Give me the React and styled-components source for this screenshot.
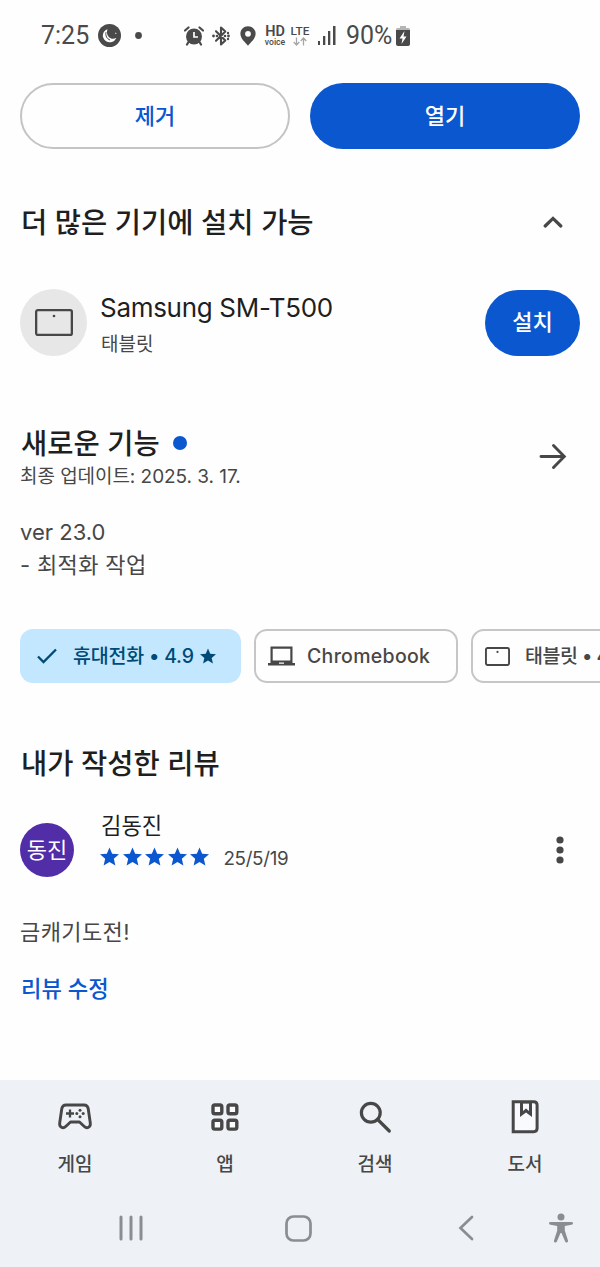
import React from "react";
import styled, { createGlobalStyle } from "styled-components";

const BLUE = "#0b57cf";
const INK = "#1f1f1f";
const MUTED = "#474747";

const Global = createGlobalStyle`
  * { box-sizing: border-box; }
  html, body { margin: 0; padding: 0; background: #fefefe; }
  body {
    font-family: Inter, "Noto Sans CJK KR", sans-serif;
    color: ${INK};
    overflow: hidden;
  }
  button { font-family: inherit; padding: 0; border: 0; background: none; }
  svg { display: block; flex: none; }
`;

const Screen = styled.div`
  width: 600px;
  height: 1267px;
  display: flex;
  flex-direction: column;
  background: #fefefe;
  overflow: hidden;
  white-space: nowrap;
`;

const StatusBar = styled.header`
  height: 83px;
  padding: 0 0 12px 41px;
  display: flex;
  align-items: center;
  font-family: Roboto, sans-serif;
  color: #4a4a4a;
`;

const StatusText = styled.span`
  display: block;
  width: ${(p) => p.$w}px;
  font-size: 25px;
  font-weight: 370;
  line-height: 30px;
`;

const StatusGlyph = styled.span`
  margin-left: ${(p) => p.$gap}px;
`;

const NetworkLabel = styled.span`
  width: ${(p) => p.$w}px;
  margin-left: ${(p) => p.$gap}px;
  display: flex;
  flex-direction: column;
  align-items: center;
  font-weight: ${(p) => p.$weight};
  font-size: ${(p) => p.$size}px;
  line-height: 12px;
`;

const VoiceLabel = styled.span`
  font-size: 8.6px;
  font-weight: 500;
  line-height: 8px;
`;

const Actions = styled.div`
  display: grid;
  grid-template-columns: 1fr 1fr;
  gap: 20px;
  padding: 0 20px;
`;

const PillButton = styled.button`
  height: 66px;
  width: ${(p) => p.$w || "auto"};
  padding-bottom: 1px;
  border-radius: 33px;
  border: ${(p) => (p.$outlined ? "2px solid #c4c4c4" : "0")};
  background: ${(p) => (p.$outlined ? "transparent" : BLUE)};
  color: ${(p) => (p.$outlined ? BLUE : "#fff")};
  font-size: 22px;
  font-weight: 500;
  line-height: 30px;
`;

const Section = styled.section`
  padding: 0 20px;
  margin-top: ${(p) => p.$top}px;
`;

const Row = styled.div`
  display: flex;
  align-items: center;
  justify-content: space-between;
`;

const Heading = styled.h2`
  margin: 0;
  padding: 1px 0 0 ${(p) => p.$inset || 0}px;
  font-size: 28.5px;
  font-weight: 500;
  line-height: 39px;
`;

const IconSlot = styled.span`
  width: 54px;
  display: flex;
  justify-content: center;
`;

const DeviceRow = styled.div`
  margin-top: 47px;
  height: 67px;
  display: flex;
  align-items: center;
`;

const DeviceBadge = styled.div`
  width: 67px;
  height: 67px;
  border-radius: 50%;
  background: #e7e7e7;
  display: flex;
  align-items: center;
  justify-content: center;
`;

const DeviceInfo = styled.div`
  flex: 1;
  padding-top: 6px;
  margin-left: 13px;
`;

const DeviceName = styled.div`
  font-size: 26px;
  line-height: 38px;
  letter-spacing: -0.3px;
`;

const DeviceKind = styled.div`
  padding-left: 1px;
  font-size: 19px;
  line-height: 35px;
  color: ${MUTED};
`;

const NewDot = styled.i`
  display: inline-block;
  width: 14px;
  height: 14px;
  margin-left: 13px;
  border-radius: 50%;
  background: ${BLUE};
`;

const HeadingLine = styled.div`
  display: flex;
  align-items: center;
`;

const UpdateDate = styled.div`
  padding-top: 1px;
  font-size: 19px;
  line-height: 26px;
  letter-spacing: -0.05px;
  color: ${MUTED};
`;

const Notes = styled.p`
  margin: 26px 0 0;
  font-size: 22px;
  line-height: 33px;
  color: ${MUTED};
`;

const NoteLine = styled.span`
  display: block;
  letter-spacing: ${(p) => p.$track || 0}px;
`;

const ChipStrip = styled.div`
  margin-top: 47px;
  padding-left: 20px;
  display: flex;
  gap: 13px;
`;

const Chip = styled.button`
  flex: none;
  width: ${(p) => p.$w}px;
  height: 54px;
  padding-left: ${(p) => p.$pad}px;
  border-radius: 13px;
  border: ${(p) => (p.$selected ? "0" : "2px solid #c6c6c6")};
  background: ${(p) => (p.$selected ? "#c2e7ff" : "transparent")};
  color: ${(p) => (p.$selected ? "#004a77" : MUTED)};
  display: flex;
  align-items: center;
  font-size: 19.5px;
  font-weight: 500;
  line-height: 28px;
`;

const ChipLabel = styled.span`
  margin: 0 ${(p) => p.$right || 0}px 0 ${(p) => p.$left}px;
  letter-spacing: ${(p) => p.$track || 0}px;
`;

const ReviewRow = styled.div`
  margin-top: 29px;
  display: flex;
`;

const Avatar = styled.div`
  width: 54px;
  height: 54px;
  margin-top: 11px;
  border-radius: 50%;
  background: #512da8;
  color: #fff;
  font-size: 22px;
  line-height: 54px;
  text-align: center;
`;

const Reviewer = styled.div`
  flex: 1;
  margin-left: 26px;
`;

const ReviewerName = styled.div`
  padding-left: 1px;
  font-size: 22.2px;
  line-height: 28px;
`;

const Rating = styled.div`
  display: flex;
  align-items: center;
  height: 32px;
  color: ${BLUE};
`;

const Stars = styled.span`
  display: flex;
  gap: 3.6px;
`;

const ReviewDate = styled.span`
  margin: 6px 0 0 14px;
  font-size: 18.8px;
  line-height: 26px;
  letter-spacing: -0.3px;
  color: ${MUTED};
`;

const MenuSlot = styled.span`
  width: 40px;
  padding-top: 24px;
  display: flex;
  justify-content: center;
`;

const ReviewText = styled.p`
  margin: 40px 0 0;
  font-size: 22px;
  line-height: 30px;
  letter-spacing: 0.4px;
  color: ${MUTED};
`;

const EditLink = styled.a`
  display: block;
  margin-top: 27px;
  padding-left: 1px;
  font-size: 22.2px;
  font-weight: 500;
  line-height: 30px;
  color: ${BLUE};
`;

const BottomArea = styled.footer`
  height: 187px;
  margin-top: auto;
  background: #eef2f7;
`;

const Tabs = styled.nav`
  display: grid;
  grid-template-columns: repeat(4, 1fr);
`;

const Tab = styled.button`
  padding-top: 17px;
  display: flex;
  flex-direction: column;
  align-items: center;
  color: ${MUTED};
`;

const TabLabel = styled.span`
  margin-top: 15px;
  font-size: 19px;
  font-weight: 500;
  line-height: 26px;
`;

const SystemNav = styled.div`
  margin-top: 30px;
  height: 40px;
  padding-left: 116px;
  display: flex;
  align-items: center;
`;

const SystemKey = styled.span`
  width: 30px;
  margin-right: ${(p) => p.$after || 0}px;
  display: flex;
  justify-content: center;
`;

const Star = ({ size }) => (
  <svg width={size} height={size} viewBox="2 1.500 20 20" fill="currentColor">
    <path d="M12 17.270L18.180 21l-1.640-7.030L22 9.240l-7.190-.61L12 2 9.190 8.630 2 9.240l5.460 4.730L5.820 21z" />
  </svg>
);

const MoonIcon = () => (
  <svg width="23" height="23" viewBox="0 0 23 23">
    <circle cx="11.500" cy="11.500" r="11.500" fill="#4a4a4a" />
    <path d="M9.500 5.200C5.600 6.500 4.200 10.300 5.200 13.600c1.200 3.800 5.600 5.700 9.200 4.200 1.900-.8 3.200-2.200 3.900-4.100-2.500 1.600-5.600 1.200-7.500-.8-2-2.100-2.300-5-1.300-7.700z" fill="#fff" />
    <path d="M8 8.200c-.8 3.500 1 6.700 4 7.800" fill="none" stroke="#4a4a4a" strokeWidth="1" />
    <path d="M17.500 8.500l1.300.9-1.600.7z" fill="#fff" />
  </svg>
);

const AlarmIcon = () => (
  <svg width="20" height="20" viewBox="0 0 20 20">
    <circle cx="10" cy="10.500" r="8" fill="#4a4a4a" />
    <path d="M1 4.500L4.500 1.500M19 4.500l-3.500-3M4.500 16L3 18.500M15.500 16l1.500 2.500" stroke="#4a4a4a" strokeWidth="2.200" strokeLinecap="round" />
    <path d="M10 6v5h4" fill="none" stroke="#fff" strokeWidth="1.700" />
  </svg>
);

const BluetoothIcon = () => (
  <svg width="18" height="20" viewBox="0 0 18 20">
    <path d="M4 5.200l9.300 9.300L9 18.500v-17l4.300 4L4 14.800" fill="none" stroke="#4a4a4a" strokeWidth="2.100" strokeLinejoin="round" strokeLinecap="round" />
    <g fill="#4a4a4a"><circle cx="1.500" cy="10" r="1.400" /><circle cx="5" cy="10" r="1.300" /><circle cx="13" cy="10" r="1.300" /><circle cx="16.500" cy="10" r="1.400" /><circle cx="16" cy="7" r="1.200" /><circle cx="16" cy="13" r="1.200" /></g>
  </svg>
);

const PinIcon = () => (
  <svg width="16" height="20" viewBox="0 0 16 20">
    <path fillRule="evenodd" d="M8 .3C3.700.3.400 3.500.400 7.700c0 5 5.100 8.800 7.600 12 2.500-3.200 7.600-7 7.600-12C15.600 3.500 12.300.3 8 .3zM8 4.900a2.900 2.900 0 1 1 0 5.800 2.900 2.900 0 0 1 0-5.800z" fill="#4a4a4a" />
  </svg>
);

const DataArrows = () => (
  <svg width="14" height="9" viewBox="0 0 14 9">
    <path d="M3.500.5v7.500M.700 5l2.800 3 2.800-3M10.500 8.500V1M7.700 4l2.800-3 2.800 3" fill="none" stroke="#a6a6a6" strokeWidth="1.300" />
  </svg>
);

const SignalIcon = () => (
  <svg width="18" height="19" viewBox="0 0 18 19" fill="#4a4a4a">
    <rect x="0" y="15" width="2" height="4" /><rect x="5" y="10" width="2.300" height="9" />
    <rect x="10" y="5" width="2.300" height="14" /><rect x="15" y="0" width="2.500" height="19" />
  </svg>
);

const BatteryIcon = () => (
  <svg width="14" height="20" viewBox="0 0 14 20">
    <path d="M4 0h6v2h2.500Q14 2 14 4H0q0-2 1.500-2H4z" fill="#b5b5b5" />
    <path d="M0 4h14v14q0 2-2 2H2q-2 0-2-2z" fill="#4a4a4a" />
    <path d="M8.500 5L3.500 12.500h3L5.500 18l5-7.500h-3z" fill="#fff" />
  </svg>
);

const TabletIcon = ({ w, h, stroke }) => (
  <svg width={w} height={h} fill="none">
    <rect x={stroke / 2} y={stroke / 2} width={w - stroke} height={h - stroke} rx="1.700" stroke={MUTED} strokeWidth={stroke} />
    <circle cx={w / 2} cy={h * 0.26} r={stroke * 0.58} fill={MUTED} />
  </svg>
);

const LaptopIcon = () => (
  <svg width="27" height="20" viewBox="0 0 27 20">
    <path fillRule="evenodd" d="M2.500.5h22V17H27v2.500H0V17h2.500zM4.700 2.700V14.500h17.600V2.700zM11 16.500v1.300h5v-1.300z" fill={MUTED} />
  </svg>
);

const GameIcon = () => (
  <svg width="40" height="40" viewBox="0 0 40 40" fill="none" stroke={MUTED}>
    <path d="M11 8h18q3.500 0 4.200 3.500L35.300 26c.6 4.300-3.300 6-6 3.500L24.500 25h-9l-4.800 4.500c-2.700 2.500-6.600.8-6-3.500L6.800 11.500Q7.500 8 11 8z" strokeWidth="2.900" strokeLinejoin="round" />
    <path d="M15 12.500v8M11 16.500h8" strokeWidth="2.300" />
    <g fill={MUTED} stroke="none"><circle cx="25" cy="13.200" r="1.500" /><circle cx="21.800" cy="16.500" r="1.500" /><circle cx="28.200" cy="16.500" r="1.500" /><circle cx="25" cy="19.700" r="1.500" /></g>
  </svg>
);

const AppsIcon = () => (
  <svg width="40" height="40" viewBox="0 0 40 40" fill="#fafcff" stroke={MUTED} strokeWidth="3.400">
    {[8, 23.3].map((y) => [8, 23].map((x) => <rect key={`${x}-${y}`} x={x} y={y} width="8.800" height="8.800" rx="1.800" />))}
  </svg>
);

const SearchIcon = () => (
  <svg width="40" height="40" viewBox="0 0 40 40" fill="none" stroke={MUTED} strokeWidth="3.200" strokeLinecap="round">
    <circle cx="15.800" cy="15.700" r="9.400" /><path d="M22.700 22.500L34.300 34" />
  </svg>
);

const BookIcon = () => (
  <svg width="40" height="40" viewBox="0 0 40 40">
    <path d="M8.200 4.700h20.500q3.400 0 3.400 3.400v23.200q0 3.400-3.400 3.400H8.200z" fill="#f8fafd" stroke={MUTED} strokeWidth="3" />
    <path fillRule="evenodd" d="M15 4h12v16l-6-4.500-6 4.500zM18 6.500v7.500l3-2.500 3 2.500v-7.500z" fill={MUTED} />
  </svg>
);

const TABS = [
  ["게임", GameIcon],
  ["앱", AppsIcon],
  ["검색", SearchIcon],
  ["도서", BookIcon],
];

export default function App() {
  return (
    <Screen>
      <Global />
      <StatusBar>
        <StatusText $w={57}>7:25</StatusText>
        <MoonIcon />
        <StatusGlyph $gap={14}><svg width="7" height="7"><circle cx="3.500" cy="3.500" r="3.400" fill="#4a4a4a" /></svg></StatusGlyph>
        <StatusGlyph $gap={42}><AlarmIcon /></StatusGlyph>
        <StatusGlyph $gap={8}><BluetoothIcon /></StatusGlyph>
        <StatusGlyph $gap={10}><PinIcon /></StatusGlyph>
        <NetworkLabel $w={22} $gap={8} $size={14.5} $weight={600}>HD<VoiceLabel>voice</VoiceLabel></NetworkLabel>
        <NetworkLabel $w={20} $gap={4} $size={11.8} $weight={500}>LTE<DataArrows /></NetworkLabel>
        <StatusGlyph $gap={8}><SignalIcon /></StatusGlyph>
        <StatusGlyph $gap={10}><StatusText $w={49}>90%</StatusText></StatusGlyph>
        <StatusGlyph $gap={1}><BatteryIcon /></StatusGlyph>
      </StatusBar>

      <Actions>
        <PillButton $outlined>제거</PillButton>
        <PillButton>열기</PillButton>
      </Actions>

      <Section $top={53}>
        <Row>
          <Heading $inset={1}>더 많은 기기에 설치 가능</Heading>
          <IconSlot>
            <svg width="20" height="14" fill="none" stroke={MUTED} strokeWidth="3.200" strokeLinecap="round" strokeLinejoin="miter"><path d="M2.200 11L10 3.400 17.800 11" /></svg>
          </IconSlot>
        </Row>
        <DeviceRow>
          <DeviceBadge><TabletIcon w={38} h={27} stroke={2.3} /></DeviceBadge>
          <DeviceInfo>
            <DeviceName>Samsung SM-T500</DeviceName>
            <DeviceKind>태블릿</DeviceKind>
          </DeviceInfo>
          <PillButton $w="95px">설치</PillButton>
        </DeviceRow>
      </Section>

      <Section $top={67}>
        <Row>
          <div>
            <HeadingLine><Heading $inset={1}>새로운 기능</Heading><NewDot /></HeadingLine>
            <UpdateDate>최종 업데이트: 2025. 3. 17.</UpdateDate>
          </div>
          <IconSlot>
            <svg width="28" height="28" fill="none" stroke={MUTED} strokeWidth="2.900" strokeLinecap="round" strokeLinejoin="miter"><path d="M2 13.500h23M14.500 2.500L25.300 13.500 14.500 24.500" /></svg>
          </IconSlot>
        </Row>
        <Notes>
          <NoteLine>ver 23.0</NoteLine>
          <NoteLine $track={0.35}>- 최적화 작업</NoteLine>
        </Notes>
      </Section>

      <ChipStrip>
        <Chip $selected $w={221} $pad={17}>
          <svg width="20" height="16" fill="none" stroke="#004a77" strokeWidth="2.300"><path d="M1 8.500l5.500 5.500L19 1.500" /></svg>
          <ChipLabel $left={16} $right={6} $track={-0.2}>휴대전화 • 4.9</ChipLabel>
          <Star size={16} />
        </Chip>
        <Chip $w={204} $pad={12}>
          <LaptopIcon />
          <ChipLabel $left={12} $track={0.3}>Chromebook</ChipLabel>
        </Chip>
        <Chip $w={210} $pad={12}>
          <TabletIcon w={25} h={19} stroke={1.9} />
          <ChipLabel $left={15} $track={-0.5}>태블릿 • 4.8</ChipLabel>
        </Chip>
      </ChipStrip>

      <Section $top={60}>
        <Heading $inset={1}>내가 작성한 리뷰</Heading>
        <ReviewRow>
          <Avatar>동진</Avatar>
          <Reviewer>
            <ReviewerName>김동진</ReviewerName>
            <Rating>
              <Stars>{[1, 2, 3, 4, 5].map((n) => <Star key={n} size={19} />)}</Stars>
              <ReviewDate>25/5/19</ReviewDate>
            </Rating>
          </Reviewer>
          <MenuSlot>
            <svg width="8" height="28" fill={MUTED}><circle cx="4" cy="4" r="3.600" /><circle cx="4" cy="14" r="3.600" /><circle cx="4" cy="24" r="3.600" /></svg>
          </MenuSlot>
        </ReviewRow>
        <ReviewText>금캐기도전!</ReviewText>
        <EditLink>리뷰 수정</EditLink>
      </Section>

      <BottomArea>
        <Tabs>
          {TABS.map(([label, Icon]) => (
            <Tab key={label}><Icon /><TabLabel>{label}</TabLabel></Tab>
          ))}
        </Tabs>
        <SystemNav>
          <SystemKey $after={137}>
            <svg width="24" height="26" stroke="#8a8d91" strokeWidth="3" strokeLinecap="round"><path d="M2 2v22M12 2v22M22 2v22" /></svg>
          </SystemKey>
          <SystemKey $after={138}>
            <svg width="27" height="27" fill="none" stroke="#8a8d91" strokeWidth="2.700"><rect x="1.500" y="1.500" width="24" height="24" rx="7" /></svg>
          </SystemKey>
          <SystemKey $after={65}>
            <svg width="16" height="26" fill="none" stroke="#8a8d91" strokeWidth="2.700" strokeLinecap="round"><path d="M14 2L2.500 13 14 24" /></svg>
          </SystemKey>
          <SystemKey>
            <svg width="24" height="30" fill="#8a8d91"><circle cx="12" cy="4" r="3.500" /><path d="M1.500 9h21q1.500 0 1.500 1.300t-1.500 1.500L15.800 13v4.500l3.200 10q.4 1.500-1 1.900t-1.900-1L12.500 20h-1L7.900 28.400q-.6 1.400-2 1T5 27.500l3.200-10V13l-6.700-1.200Q0 11.600 0 10.300T1.500 9z" /></svg>
          </SystemKey>
        </SystemNav>
      </BottomArea>
    </Screen>
  );
}
